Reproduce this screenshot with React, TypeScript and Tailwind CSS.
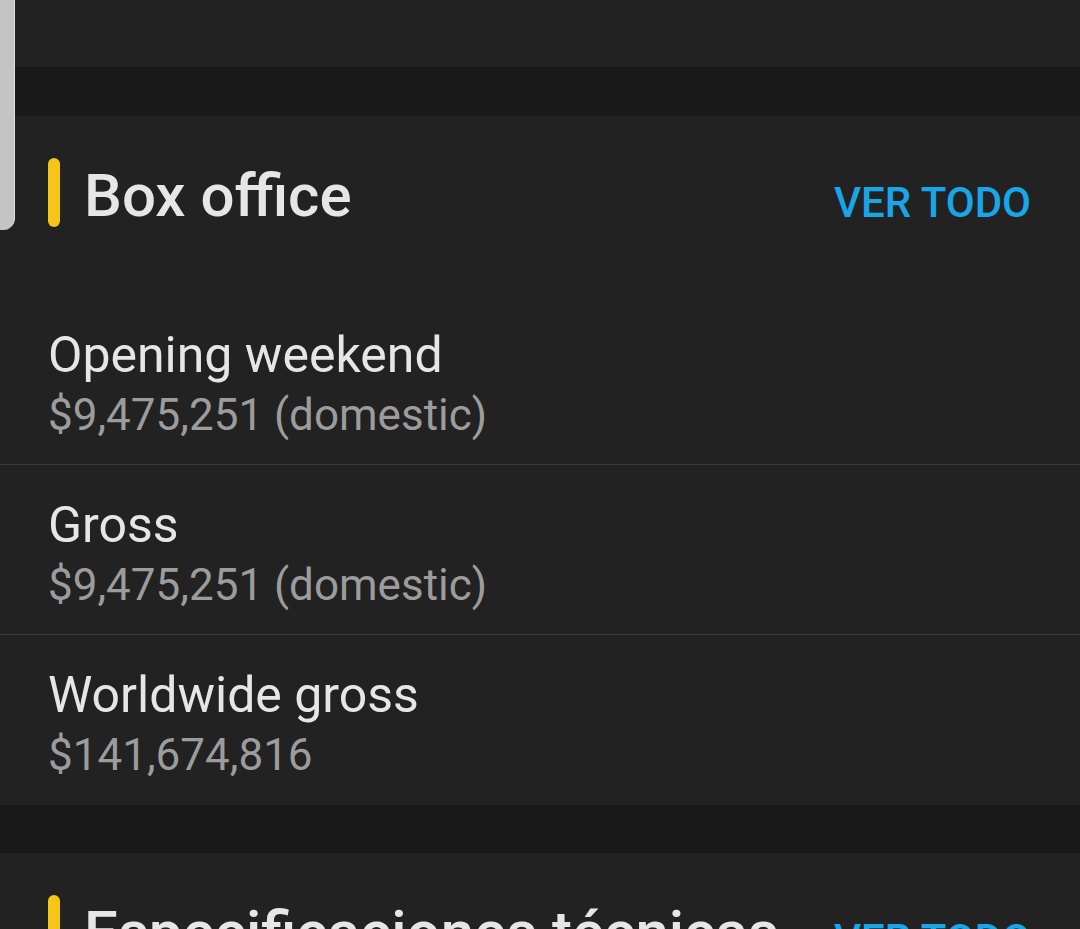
import React from 'react';

type Item = { label: string; value: string };

const boxOffice: Item[] = [
  { label: 'Opening weekend', value: '$9,475,251 (domestic)' },
  { label: 'Gross', value: '$9,475,251 (domestic)' },
  { label: 'Worldwide gross', value: '$141,674,816' },
];

const SectionHeader: React.FC<{ title: string }> = ({ title }) => (
  <div className="flex h-[179px] items-start pt-[42px] pl-[48px] pr-[49px]">
    <div className="h-[69px] w-[12px] shrink-0 rounded-full bg-[#f5c518]" />
    <h2 className="ml-[24px] mt-[3px] text-[60px] font-medium leading-[69px] text-[#e6e6e6] whitespace-nowrap">
      {title}
    </h2>
    <button className="ml-auto mt-[21px] text-[42px] font-medium leading-[48px] text-[#18a6e8] whitespace-nowrap">
      VER TODO
    </button>
  </div>
);

const App: React.FC = () => {
  return (
    <div
      className="relative h-[929px] w-full overflow-hidden bg-[#191919]"
      style={{ fontFamily: 'Roboto, "Noto Sans", sans-serif' }}
    >
      {/* scrollbar thumb */}
      <div className="absolute left-0 top-0 h-[230px] w-[15px] rounded-br-[12px] border-r border-[#e0e0e0] bg-[#c4c4c4]" />

      <div className="h-[67px] bg-[#222222]" />

      <section className="mt-[49px] bg-[#222222]">
        <SectionHeader title="Box office" />
        {boxOffice.map((item, i) => (
          <div
            key={item.label}
            className={`h-[170px] pl-[48px] pt-[32px] ${i < boxOffice.length - 1 ? 'border-b border-[#3a3a3a]' : ''}`}
          >
            <div className="text-[50px] leading-[56px] text-[#e6e6e6]">{item.label}</div>
            <div className="mt-[6px] text-[44px] leading-[52px] text-[#9c9c9c]">{item.value}</div>
          </div>
        ))}
      </section>

      <section className="mt-[48px] bg-[#222222]">
        <SectionHeader title="Especificaciones técnicas" />
      </section>
    </div>
  );
};

export default App;
